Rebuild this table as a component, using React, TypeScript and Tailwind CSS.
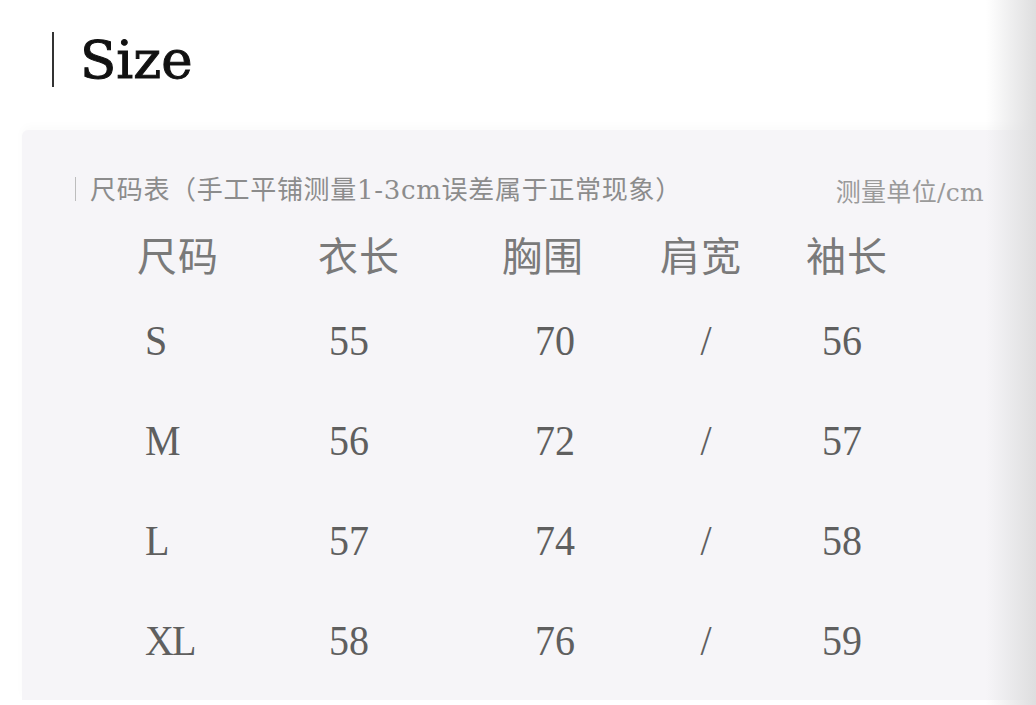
import React from 'react';

const serif = { fontFamily: '"DejaVu Serif", "Noto Sans CJK SC", serif' };
const cjk = { fontFamily: '"Noto Sans CJK SC", sans-serif' };
const num = { fontFamily: '"Liberation Serif", serif' };

const headers = ['尺码', '衣长', '胸围', '肩宽', '袖长'];

const rows = [
  { size: 'S', length: '55', chest: '70', shoulder: '/', sleeve: '56' },
  { size: 'M', length: '56', chest: '72', shoulder: '/', sleeve: '57' },
  { size: 'L', length: '57', chest: '74', shoulder: '/', sleeve: '58' },
  { size: 'XL', length: '58', chest: '76', shoulder: '/', sleeve: '59' },
];

const cols = 'grid grid-cols-[156px_206px_162px_154px_138px]';

export default function App() {
  return (
    <div className="relative w-[1036px] h-[705px] overflow-hidden bg-white">
      {/* Title */}
      <div className="flex items-center h-[130px] pl-[52px] pb-[12px]">
        <div className="w-[2px] h-[55px] bg-[#333]" />
        <h1 className="ml-[26px] text-[53px] leading-none text-[#111] [-webkit-text-stroke:1px_#111]" style={serif}>
          Size
        </h1>
      </div>

      {/* Size chart */}
      <div className="ml-[22px] h-[570px] bg-[#f6f5f8] rounded-tl-[6px] shadow-[0_-4px_10px_rgba(0,0,0,0.02)]">
        <div className="flex items-center justify-between pt-[42px] pl-[53px] pr-[52px]">
          <div className="flex items-center">
            <div className="w-px h-[24px] bg-[#bdbdbd]" />
            <span className="ml-[14px] text-[26px] leading-none text-[#8c8c8c] tracking-[0.7px]" style={serif}>
              <span style={cjk}>尺码表（手工平铺测量</span>1-3cm<span style={cjk}>误差属于正常现象）</span>
            </span>
          </div>
          <span className="mt-[6px] text-[25px] leading-none text-[#9a9a9a] tracking-[0.3px]" style={serif}>
            <span style={cjk}>测量单位</span>/cm
          </span>
        </div>

        <div className="pl-[78px] pt-[24px]">
          <div className={`${cols} h-[50px] items-center text-[40px] leading-none text-[#7a7a7a] tracking-[1px]`} style={cjk}>
            {headers.map((h) => (
              <div key={h} className="text-center">{h}</div>
            ))}
          </div>

          <div className="mt-[12px]">
            {rows.map((r) => (
              <div key={r.size} className={`${cols} h-[100px] items-center text-[40px] leading-none text-[#5f5f5f]`} style={num}>
                <div className="pl-[45px]"><span className="inline-block scale-y-[1.08] tracking-[-2px]">{r.size}</span></div>
                <div className="text-center pr-[20px]"><span className="inline-block scale-y-[1.08]">{r.length}</span></div>
                <div className="text-center pl-[24px]"><span className="inline-block scale-y-[1.08]">{r.chest}</span></div>
                <div className="text-center pl-[10px]"><span className="inline-block scale-y-[1.08]">{r.shoulder}</span></div>
                <div className="text-center pr-[10px]"><span className="inline-block scale-y-[1.08]">{r.sleeve}</span></div>
              </div>
            ))}
          </div>
        </div>
      </div>

      {/* page edge shading */}
      <div className="pointer-events-none absolute top-0 right-0 w-[50px] h-full bg-gradient-to-r from-transparent to-[#dededf]" />
    </div>
  );
}
